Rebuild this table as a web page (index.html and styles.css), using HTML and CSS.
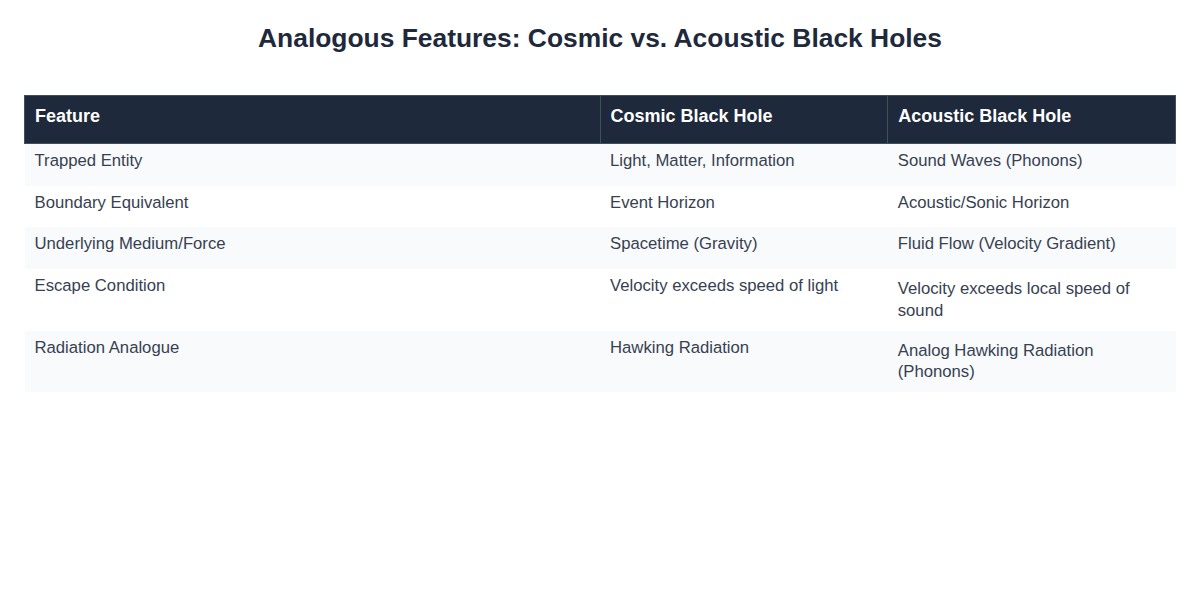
FILE: index.html
```html
<!DOCTYPE html>
<html>
<head>
<meta charset="utf-8">
<link rel="stylesheet" href="styles.css">
</head>
<body>
<div class="page">
  <h1 class="title">Analogous Features: Cosmic vs. Acoustic Black Holes</h1>
  <table class="compare">
    <thead>
      <tr>
        <th class="c1">Feature</th>
        <th class="c2">Cosmic Black Hole</th>
        <th class="c3">Acoustic Black Hole</th>
      </tr>
    </thead>
    <tbody>
      <tr><td>Trapped Entity</td><td>Light, Matter, Information</td><td>Sound Waves (Phonons)</td></tr>
      <tr><td>Boundary Equivalent</td><td>Event Horizon</td><td>Acoustic/Sonic Horizon</td></tr>
      <tr><td>Underlying Medium/Force</td><td>Spacetime (Gravity)</td><td>Fluid Flow (Velocity Gradient)</td></tr>
      <tr><td>Escape Condition</td><td>Velocity exceeds speed of light</td><td class="wrap">Velocity exceeds local speed of sound</td></tr>
      <tr><td>Radiation Analogue</td><td>Hawking Radiation</td><td class="wrap">Analog Hawking Radiation (Phonons)</td></tr>
    </tbody>
  </table>
</div>
</body>
</html>
```

FILE: styles.css
```css
html, body {
  margin: 0;
  padding: 0;
  background: #ffffff;
}
.page {
  padding: 22px 24px;
  font-family: "Liberation Sans", Arial, sans-serif;
}
.title {
  margin: 0 0 41px 0;
  text-align: center;
  font-size: 26.4px;
  line-height: 32px;
  font-weight: 700;
  color: #1e293b;
}
.compare {
  width: 100%;
  border-collapse: collapse;
  table-layout: fixed;
}
.compare th,
.compare td {
  box-sizing: border-box;
}
.compare .c1 { width: 50%; }
.compare .c2 { width: 25%; }
.compare .c3 { width: 25%; }
.compare th {
  background: #1e293b;
  color: #ffffff;
  font-size: 18px;
  line-height: 23px;
  font-weight: 700;
  text-align: left;
  padding: 9px 10px 15px 10px;
  border: 1px solid #3e5058;
}
.compare td {
  font-size: 16.7px;
  line-height: 21.7px;
  color: #374151;
  padding: 6px 10px 14px 10px;
  vertical-align: top;
}
.compare td.wrap {
  padding-top: 9px;
  padding-bottom: 9px;
}
.compare tbody tr:nth-child(odd) {
  background: #f8fafc;
}
```
